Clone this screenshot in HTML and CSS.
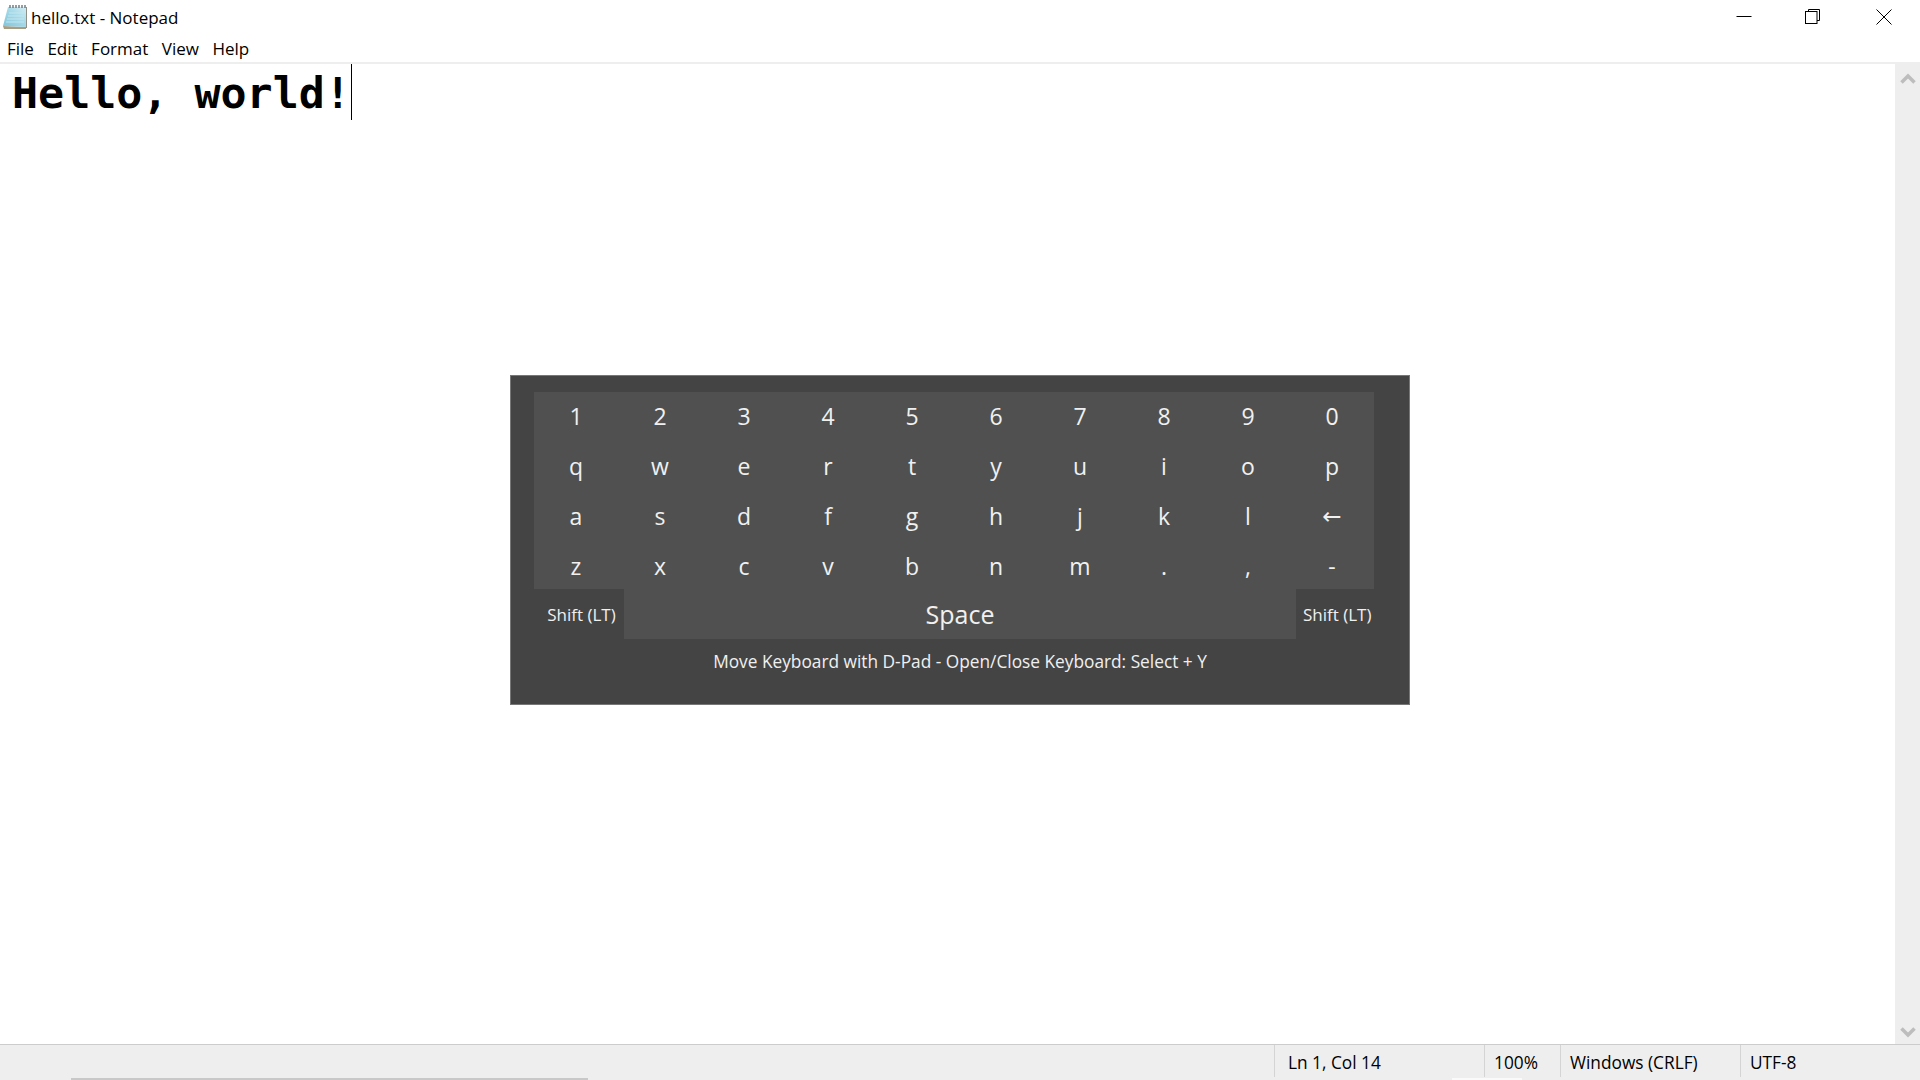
FILE: index.html
```html
<!DOCTYPE html>
<html lang="en">
<head>
  <meta charset="UTF-8">
  <title>hello.txt - Notepad</title>
  <link rel="stylesheet" href="styles.css">
</head>
<body>
  <div class="window">
    <!-- Title bar -->
    <div class="title-bar">
      <svg class="app-icon" width="24" height="25" viewBox="0 0 24 25">
        <defs>
          <linearGradient id="pageFill" x1="0" y1="1" x2="1" y2="0">
            <stop offset="0" stop-color="#7fc4da"/>
            <stop offset="0.6" stop-color="#a9dbe9"/>
            <stop offset="1" stop-color="#d5eef5"/>
          </linearGradient>
        </defs>
        <polygon points="0,22 23,23 23,25 1,25" fill="#a89c82"/>
        <polygon points="5,3 23.500,3 23.500,23 0,22" fill="url(#pageFill)"/>
        <path d="M23.500 3V24" stroke="#8f8f86" stroke-width="1"/>
        <path d="M6 9H21M5 12H21M4 15H21M3 18H21" stroke="#c4e6ef" stroke-width="1"/>
        <path d="M7 1V4M10 1V4M13 1V4M16 1V4M19 1V4M22 1V4" stroke="#66757f" stroke-width="1.400"/>
      </svg>
      <span class="title-text">hello.txt - Notepad</span>
      <div class="window-controls">
        <div class="control">
          <svg width="16" height="16" viewBox="0 0 16 16"><path d="M0.500 7.500H15.500" stroke="#000" stroke-width="1"/></svg>
        </div>
        <div class="control control-restore">
          <svg width="16" height="16" viewBox="0 0 16 16" fill="none" stroke="#000" stroke-width="1"><rect x="0.500" y="2.500" width="11.500" height="12"/><path d="M3.500 2.500V0.500H14.500V11.500H12"/></svg>
        </div>
        <div class="control">
          <svg width="16" height="16" viewBox="0 0 16 16"><path d="M0.500 0.500L15.500 15.500M15.500 0.500L0.500 15.500" stroke="#000" stroke-width="1"/></svg>
        </div>
      </div>
    </div>

    <!-- Menu -->
    <div class="menu-bar">
      <span class="menu-item">File</span>
      <span class="menu-item">Edit</span>
      <span class="menu-item">Format</span>
      <span class="menu-item">View</span>
      <span class="menu-item">Help</span>
    </div>

    <!-- Text area -->
    <div class="editor">
      <div class="text-area"><span class="text-line">Hello, world!</span><span class="caret"></span></div>
      <div class="scrollbar">
        <svg width="16" height="11" viewBox="0 0 16 11"><path d="M1.500 9.500L8 3L14.500 9.500" fill="none" stroke="#bdbdbd" stroke-width="3.500"/></svg>
        <svg width="16" height="11" viewBox="0 0 16 11"><path d="M1.500 1.500L8 8L14.500 1.500" fill="none" stroke="#bdbdbd" stroke-width="3.500"/></svg>
      </div>

      <!-- On-screen keyboard -->
      <div class="keyboard">
        <div class="keys">
          <div class="key">1</div><div class="key">2</div><div class="key">3</div><div class="key">4</div><div class="key">5</div>
          <div class="key">6</div><div class="key">7</div><div class="key">8</div><div class="key">9</div><div class="key">0</div>
          <div class="key">q</div><div class="key">w</div><div class="key">e</div><div class="key">r</div><div class="key">t</div>
          <div class="key">y</div><div class="key">u</div><div class="key">i</div><div class="key">o</div><div class="key">p</div>
          <div class="key">a</div><div class="key">s</div><div class="key">d</div><div class="key">f</div><div class="key">g</div>
          <div class="key">h</div><div class="key">j</div><div class="key">k</div><div class="key">l</div><div class="key key-arrow">←</div>
          <div class="key">z</div><div class="key">x</div><div class="key">c</div><div class="key">v</div><div class="key">b</div>
          <div class="key">n</div><div class="key">m</div><div class="key">.</div><div class="key">,</div><div class="key">-</div>
        </div>
        <div class="bottom-row">
          <div class="shift-key">Shift (LT)</div>
          <div class="space-key">Space</div>
          <div class="shift-key shift-right">Shift (LT)</div>
        </div>
        <div class="keyboard-hint">Move Keyboard with D-Pad - Open/Close Keyboard: Select + Y</div>
      </div>
    </div>

    <!-- Status bar -->
    <div class="status-bar">
      <div class="status-cell cell-pos">Ln 1, Col 14</div>
      <div class="status-cell cell-zoom">100%</div>
      <div class="status-cell cell-eol">Windows (CRLF)</div>
      <div class="status-cell cell-enc">UTF-8</div>
      <div class="h-thumb"></div>
      <div class="h-gap"></div>
    </div>
  </div>
</body>
</html>
```

FILE: styles.css
```css
* { margin: 0; padding: 0; box-sizing: border-box; }
html, body { height: 100%; }
body {
  background: #fff;
  overflow: hidden;
  font-family: 'Open Sans', 'Noto Sans', sans-serif;
  color: #000;
}
.window {
  display: flex;
  flex-direction: column;
  height: 100%;
}
/* Title bar */
.title-bar {
  display: flex;
  align-items: center;
  height: 31px;
  padding-left: 3px;
  flex: none;
}
.app-icon { flex: none; margin-top: 2px; }
.title-text {
  margin-left: 4px;
  font-size: 17px;
  margin-top: 3px;
}
.window-controls {
  display: flex;
  margin-left: auto;
  padding-right: 1px;
}
.control {
  display: flex;
  align-items: center;
  justify-content: center;
  width: 70px;
  height: 31px;
  padding-top: 3px;
}
.control-restore { padding-right: 2px; }
/* Menu */
.menu-bar {
  display: flex;
  flex: none;
  height: 33px;
  padding: 4px 0 0 7px;
  gap: 13.5px;
  align-items: center;
  font-size: 17px;
  border-bottom: 2px solid #eee;
}
/* Editor */
.editor {
  position: relative;
  display: flex;
  flex: 1;
  min-height: 0;
}
.text-area {
  flex: 1;
  display: flex;
  align-items: flex-start;
  padding-left: 12px;
}
.text-line {
  font-family: 'DejaVu Sans Mono', monospace;
  font-weight: bold;
  font-size: 43.3px;
  line-height: 56px;
  margin-top: 1px;
}
.caret {
  width: 1px;
  height: 56px;
  background: #000;
}
.scrollbar {
  display: flex;
  flex-direction: column;
  justify-content: space-between;
  align-items: center;
  width: 25px;
  padding: 9px 0 6px;
  background: #eee;
}
/* Keyboard overlay */
.keyboard {
  position: absolute;
  left: 510px;
  top: 311px;
  width: 900px;
  height: 330px;
  padding: 16px 35px 0 23px;
  background: #444;
  border: 1px solid #777;
  color: #f0f0f0;
}
.keys {
  display: grid;
  grid-template-columns: repeat(10, 84px);
  grid-auto-rows: 50px;
  height: 197px;
  background: #505050;
}
.key {
  display: flex;
  align-items: center;
  justify-content: center;
  padding-bottom: 2px;
  font-size: 23px;
}
.key-arrow { font-family: 'DejaVu Sans', sans-serif; }
.bottom-row {
  display: grid;
  grid-template-columns: 90px 672px 78px;
  height: 50px;
  align-items: stretch;
}
.shift-key {
  display: flex;
  align-items: center;
  justify-content: center;
  padding-left: 5px;
  font-size: 17px;
}
.shift-right { padding-left: 7px; justify-content: flex-start; white-space: nowrap; }
.space-key {
  display: flex;
  align-items: center;
  justify-content: center;
  background: #505050;
  font-size: 25px;
}
.keyboard-hint {
  margin-top: 11px;
  margin-right: -12px;
  text-align: center;
  font-size: 17.3px;
  white-space: nowrap;
}
/* Status bar */
.status-bar {
  position: relative;
  display: flex;
  flex: none;
  height: 36px;
  padding: 0 0 3px 1274px;
  background: #eee;
  border-top: 1px solid #ccc;
  font-size: 17.3px;
}
.status-cell {
  display: flex;
  align-items: center;
  padding-top: 3px;
  padding-left: 13px;
  border-left: 1px solid #d4d4d4;
}
.cell-pos { width: 210px; }
.cell-zoom { width: 76px; padding-left: 9px; }
.cell-eol { width: 180px; padding-left: 9px; }
.cell-enc { flex: 1; padding-left: 9px; }
.h-thumb {
  position: absolute;
  left: 71px;
  bottom: 0;
  width: 517px;
  height: 2px;
  background: #c8c8c8;
}
.h-gap {
  position: absolute;
  left: 1452px;
  bottom: 0;
  width: 70px;
  height: 2px;
  background: #fafafa;
}
```
